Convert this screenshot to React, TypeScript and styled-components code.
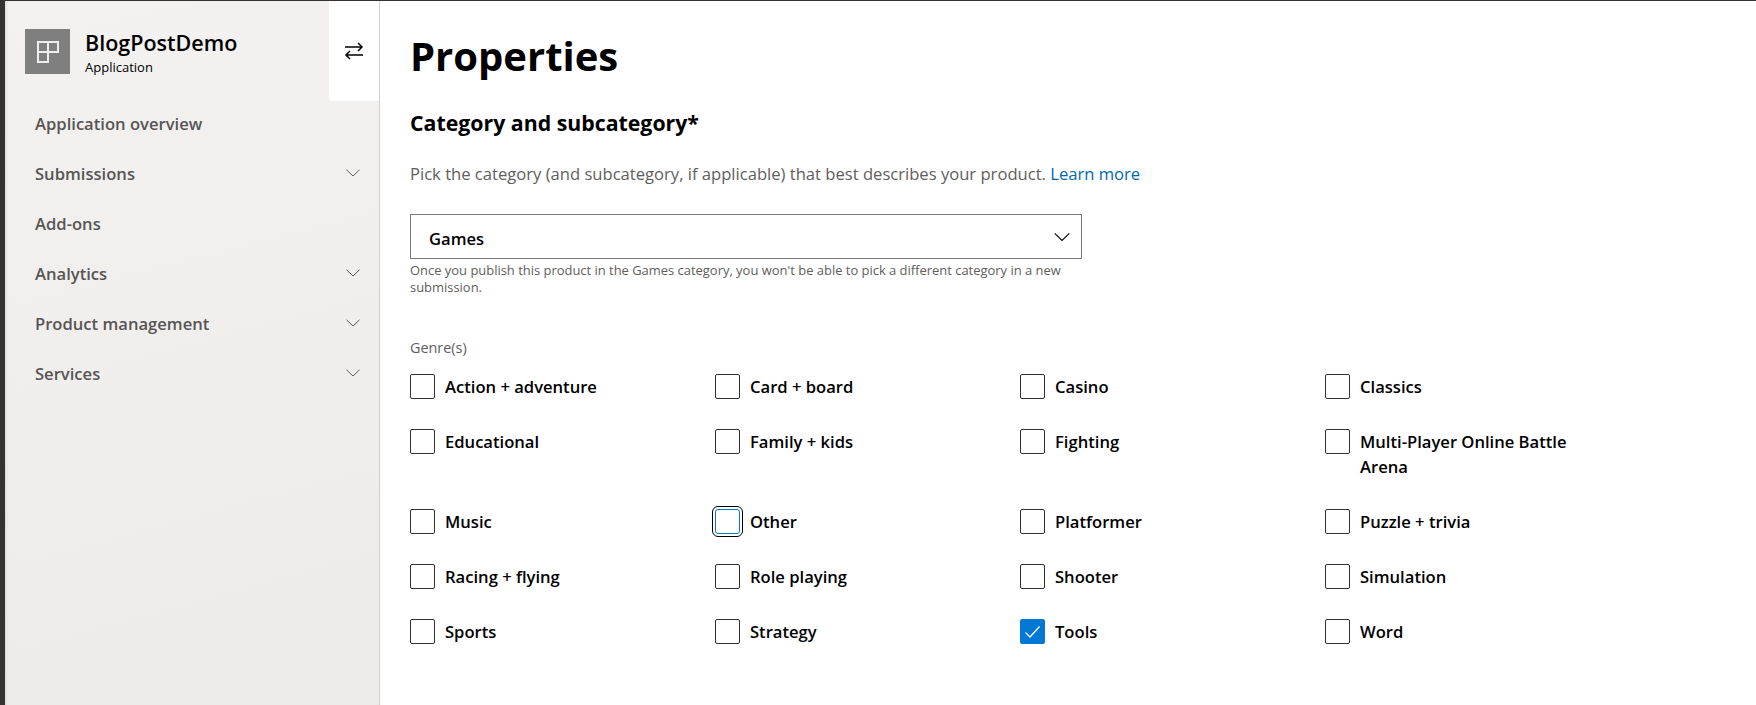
import React from "react";
import styled, { createGlobalStyle } from "styled-components";

const GlobalStyle = createGlobalStyle`
  html, body {
    margin: 0;
    height: 100%;
    overflow: hidden;
    background: #fff;
    font-family: "Open Sans", "Noto Sans", "Liberation Sans", sans-serif;
  }
  * {
    box-sizing: border-box;
  }
`;

const Page = styled.div`
  display: flex;
  width: 1756px;
  height: 705px;
  border-top: 1px solid #333;
  border-left: 5px solid #333;
  background: #fff;
`;

const Sidebar = styled.aside`
  width: 375px;
  flex: none;
  border-right: 1px solid #d2d0ce;
  background: linear-gradient(165deg, #f3f2f1 0%, #edebe9 100%);
  box-shadow: inset 3px 0 3px -2px #d8d6d4;
`;

const SidebarHead = styled.div`
  display: flex;
  justify-content: space-between;
  height: 100px;
  margin-bottom: -3px;
`;

const Brand = styled.div`
  display: flex;
  gap: 15px;
  padding: 28px 0 0 20px;
`;

const LogoTile = styled.div`
  display: flex;
  align-items: center;
  justify-content: center;
  width: 45px;
  height: 45px;
  background: #7f7f7f;
`;

const BrandText = styled.div`
  display: flex;
  flex-direction: column;
`;

const BrandName = styled.div`
  font-size: 21.5px;
  font-weight: 600;
  line-height: 28px;
  color: #000;
`;

const BrandKind = styled.div`
  margin-top: 1px;
  font-size: 13px;
  line-height: 18px;
  color: #000;
`;

const Toggle = styled.div`
  display: flex;
  align-items: center;
  justify-content: center;
  width: 50px;
  height: 100px;
  border-radius: 0 0 2px 2px;
  background: #fff;
`;

const Nav = styled.nav`
  display: flex;
  flex-direction: column;
`;

const NavItem = styled.div`
  display: flex;
  align-items: center;
  justify-content: space-between;
  height: 50px;
  padding: 0 18px 0 30px;
  font-size: 16.6px;
  font-weight: 600;
  color: #575554;
`;

const Main = styled.main`
  flex: 1;
  padding: 27px 0 0 30px;
`;

const Title = styled.h1`
  margin: 0;
  font-size: 40px;
  font-weight: 700;
  line-height: 56px;
  color: #000;
`;

const SectionTitle = styled.h2`
  margin: 25px 0 0;
  font-size: 21.3px;
  font-weight: 700;
  line-height: 28px;
  color: #000;
`;

const Description = styled.p`
  margin: 26px 0 0;
  font-size: 16.6px;
  line-height: 22px;
  color: #605e5c;
`;

const LearnMore = styled.a`
  color: #0067b8;
  text-decoration: none;
`;

const Select = styled.div`
  display: flex;
  align-items: center;
  justify-content: space-between;
  width: 672px;
  height: 45px;
  margin-top: 29px;
  padding: 3px 10px 0 18px;
  border: 1px solid #7a7a7a;
  font-size: 16.6px;
  font-weight: 600;
  color: #000;

  svg {
    margin-top: -3px;
  }
`;

const HelpText = styled.p`
  width: 672px;
  margin: 3px 0 0;
  font-size: 12.95px;
  line-height: 17px;
  color: #605e5c;
`;

const GenreLabel = styled.div`
  margin-top: 42px;
  font-size: 14.4px;
  line-height: 20px;
  color: #605e5c;
`;

const GenreGrid = styled.div`
  display: grid;
  grid-template-columns: repeat(4, 305px);
  row-gap: 30px;
  margin-top: 16px;
`;

const GenreOption = styled.label`
  display: flex;
  gap: 10px;
  padding-right: 40px;
`;

const CheckBox = styled.span<{ $checked?: boolean; $focused?: boolean }>`
  display: flex;
  align-items: center;
  justify-content: center;
  flex: none;
  width: 25px;
  height: 25px;
  border: 1px solid ${(p) => (p.$checked || p.$focused ? "#0078d4" : "#323130")};
  border-radius: 2px;
  background: ${(p) => (p.$checked ? "#0078d4" : "#fff")};
  ${(p) => p.$focused && "outline: 1px solid #000; outline-offset: 2px; border-radius: 3px;"}
`;

const OptionText = styled.span`
  font-size: 16.6px;
  font-weight: 600;
  line-height: 25px;
  color: #000;
`;

const Chevron = ({ color = "#605e5c", size = 16 }: { color?: string; size?: number }) => (
  <svg width={size} height={size} viewBox="0 0 16 16" fill="none">
    <path d="M1.5 4.8 8 11l6.5-6.2" stroke={color} strokeWidth="1" />
  </svg>
);

const AppGlyph = () => (
  <svg width="22" height="22" viewBox="0 0 22 22" fill="none" stroke="#eee" strokeWidth="2">
    <path d="M1 1h20v10H11v10H1z" />
    <path d="M1 11h10V1" />
  </svg>
);

const SwapGlyph = () => (
  <svg width="20" height="20" viewBox="0 0 20 20" fill="none" stroke="#000" strokeWidth="1.5">
    <path d="M1 6h17M14 2l4 4-4 4" />
    <path d="M19 14H2M6 10l-4 4 4 4" />
  </svg>
);

const TickGlyph = () => (
  <svg width="17" height="14" viewBox="0 0 17 14" fill="none" stroke="#fff" strokeWidth="1.4">
    <path d="M1.5 7.5 6 12 15.5 1.5" />
  </svg>
);

const navItems = [
  { label: "Application overview" },
  { label: "Submissions", more: true },
  { label: "Add-ons" },
  { label: "Analytics", more: true },
  { label: "Product management", more: true },
  { label: "Services", more: true },
];

const genres = [
  "Action + adventure",
  "Card + board",
  "Casino",
  "Classics",
  "Educational",
  "Family + kids",
  "Fighting",
  "Multi-Player Online Battle Arena",
  "Music",
  "Other",
  "Platformer",
  "Puzzle + trivia",
  "Racing + flying",
  "Role playing",
  "Shooter",
  "Simulation",
  "Sports",
  "Strategy",
  "Tools",
  "Word",
];

function App() {
  return (
    <Page>
      <GlobalStyle />
      <Sidebar>
        <SidebarHead>
          <Brand>
            <LogoTile>
              <AppGlyph />
            </LogoTile>
            <BrandText>
              <BrandName>BlogPostDemo</BrandName>
              <BrandKind>Application</BrandKind>
            </BrandText>
          </Brand>
          <Toggle>
            <SwapGlyph />
          </Toggle>
        </SidebarHead>
        <Nav>
          {navItems.map((item) => (
            <NavItem key={item.label}>
              {item.label}
              {item.more && <Chevron />}
            </NavItem>
          ))}
        </Nav>
      </Sidebar>
      <Main>
        <Title>Properties</Title>
        <SectionTitle>Category and subcategory*</SectionTitle>
        <Description>
          Pick the category (and subcategory, if applicable) that best describes your product.{" "}
          <LearnMore href="#">Learn more</LearnMore>
        </Description>
        <Select>
          Games
          <Chevron color="#000" size={18} />
        </Select>
        <HelpText>
          Once you publish this product in the Games category, you won't be able to pick a different category in a new
          submission.
        </HelpText>
        <GenreLabel>Genre(s)</GenreLabel>
        <GenreGrid>
          {genres.map((genre) => (
            <GenreOption key={genre}>
              <CheckBox $checked={genre === "Tools"} $focused={genre === "Other"}>
                {genre === "Tools" && <TickGlyph />}
              </CheckBox>
              <OptionText>{genre}</OptionText>
            </GenreOption>
          ))}
        </GenreGrid>
      </Main>
    </Page>
  );
}

export default App;
